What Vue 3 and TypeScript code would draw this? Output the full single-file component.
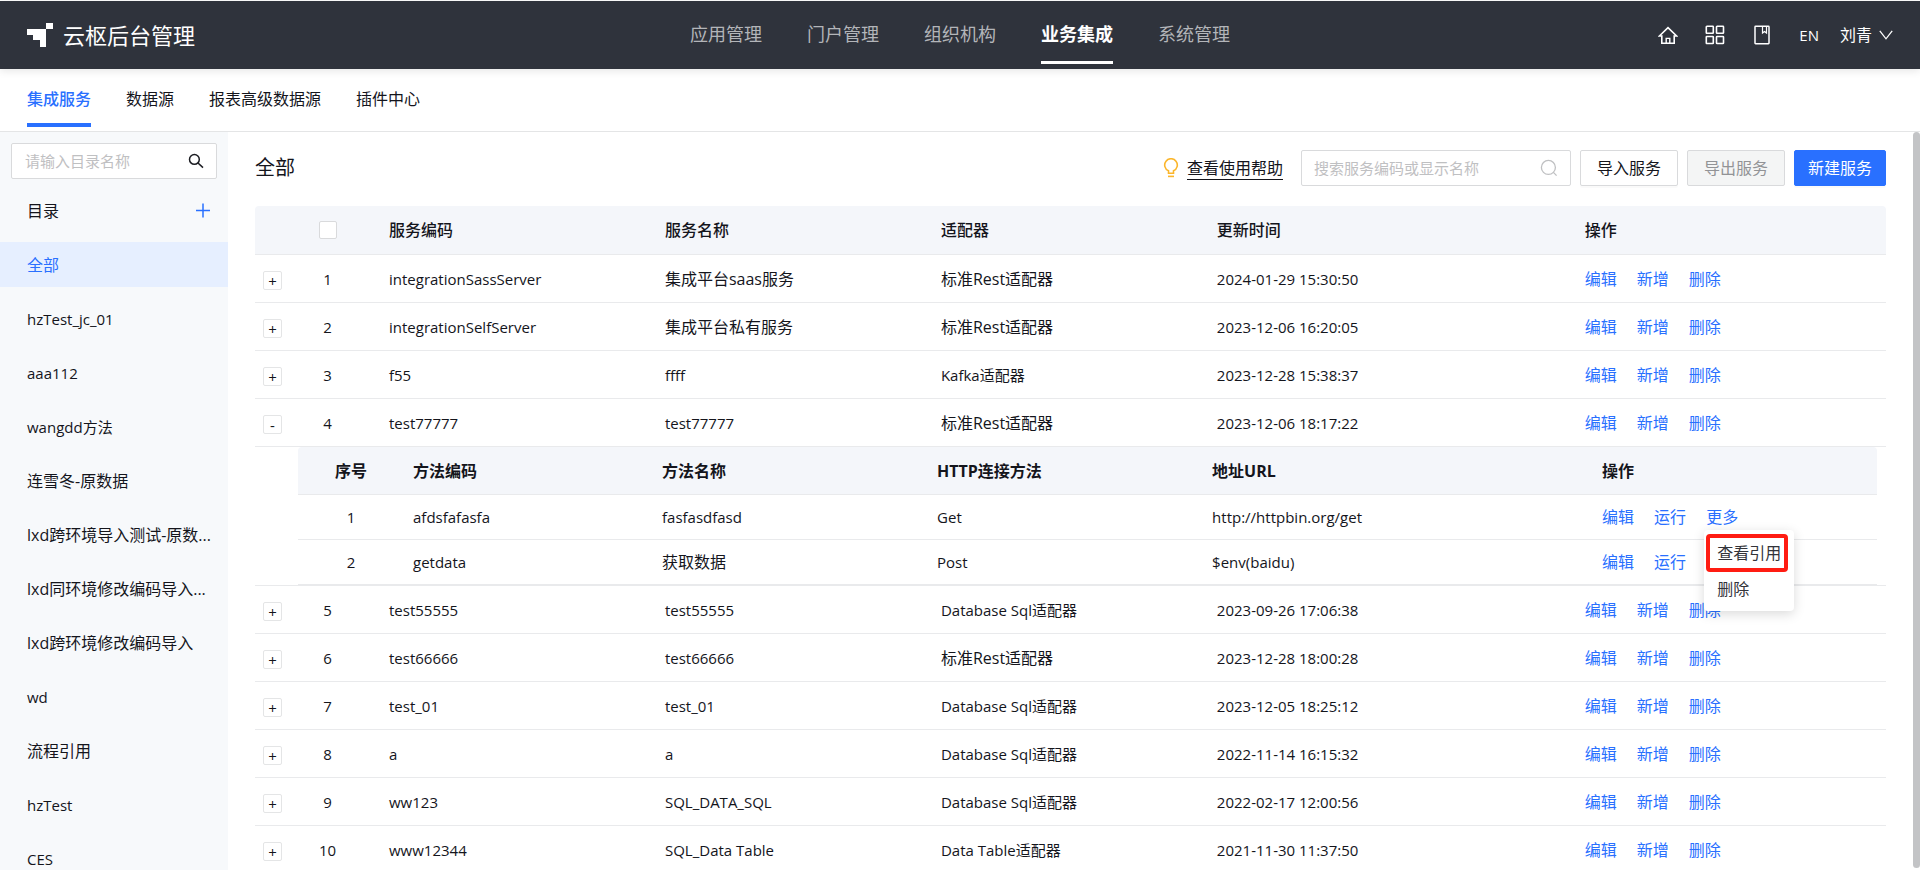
<script setup lang="ts">
import { ref } from 'vue'

interface Method {
  code: string
  name: string
  verb: string
  url: string
}

interface Service {
  code: string
  name: string
  adapter: string
  updated: string
  methods?: Method[]
}

const navItems = ['应用管理', '门户管理', '组织机构', '业务集成', '系统管理']
const activeNav = ref('业务集成')

const tabs = ['集成服务', '数据源', '报表高级数据源', '插件中心']
const activeTab = ref('集成服务')

const folders = [
  '全部',
  'hzTest_jc_01',
  'aaa112',
  'wangdd方法',
  '连雪冬-原数据',
  'lxd跨环境导入测试-原数...',
  'lxd同环境修改编码导入...',
  'lxd跨环境修改编码导入',
  'wd',
  '流程引用',
  'hzTest',
  'CES',
]
const activeFolder = ref('全部')

const services: Service[] = [
  { code: 'integrationSassServer', name: '集成平台saas服务', adapter: '标准Rest适配器', updated: '2024-01-29 15:30:50' },
  { code: 'integrationSelfServer', name: '集成平台私有服务', adapter: '标准Rest适配器', updated: '2023-12-06 16:20:05' },
  { code: 'f55', name: 'ffff', adapter: 'Kafka适配器', updated: '2023-12-28 15:38:37' },
  {
    code: 'test77777',
    name: 'test77777',
    adapter: '标准Rest适配器',
    updated: '2023-12-06 18:17:22',
    methods: [
      { code: 'afdsfafasfa', name: 'fasfasdfasd', verb: 'Get', url: 'http://httpbin.org/get' },
      { code: 'getdata', name: '获取数据', verb: 'Post', url: '$env(baidu)' },
    ],
  },
  { code: 'test55555', name: 'test55555', adapter: 'Database Sql适配器', updated: '2023-09-26 17:06:38' },
  { code: 'test66666', name: 'test66666', adapter: '标准Rest适配器', updated: '2023-12-28 18:00:28' },
  { code: 'test_01', name: 'test_01', adapter: 'Database Sql适配器', updated: '2023-12-05 18:25:12' },
  { code: 'a', name: 'a', adapter: 'Database Sql适配器', updated: '2022-11-14 16:15:32' },
  { code: 'ww123', name: 'SQL_DATA_SQL', adapter: 'Database Sql适配器', updated: '2022-02-17 12:00:56' },
  { code: 'www12344', name: 'SQL_Data Table', adapter: 'Data Table适配器', updated: '2021-11-30 11:37:50' },
]

const expanded = ref<string | null>('test77777')
const openMenu = ref<string | null>('afdsfafasfa')
const folderQuery = ref('')
const serviceQuery = ref('')

function toggleRow(code: string): void {
  expanded.value = expanded.value === code ? null : code
}

function toggleMenu(code: string): void {
  openMenu.value = openMenu.value === code ? null : code
}

// The open menu lies over the trigger of the row below it.
function isCovered(methods: Method[], index: number): boolean {
  return index > 0 && methods[index - 1].code === openMenu.value
}

// Mostly Latin strings are set one step smaller so they sit evenly beside Chinese text.
function isLatin(text: string): boolean {
  const latin = text.replace(/[^\x20-\x7e]/g, '').length
  return latin > text.length / 2
}
</script>

<template>
  <div class="shell">
    <header class="topbar">
      <a class="brand" href="#">
        <svg class="brand-mark" width="26" height="24" viewBox="0 0 26 24" aria-hidden="true">
          <path d="M0 6h19v18h-6v-7H6v-5H0z" fill="#fff" />
          <path d="M19 0h7v6h-7z" fill="#fff" />
        </svg>
        <span>云枢后台管理</span>
      </a>
      <nav class="nav">
        <a
          v-for="item in navItems"
          :key="item"
          href="#"
          class="nav-link"
          :class="{ active: item === activeNav }"
          @click.prevent="activeNav = item"
        >{{ item }}</a>
      </nav>
      <div class="tools">
        <button class="tool" type="button" aria-label="首页">
          <svg width="20" height="20" viewBox="0 0 20 20" fill="none" stroke="#fff" stroke-width="1.6">
            <path d="M1.400 11 10 2.600l8.600 8.400h-2.400v7.200H3.800V11z" />
            <path d="M8.200 18v-4.600h3.600V18" stroke-width="1.400" />
          </svg>
        </button>
        <button class="tool" type="button" aria-label="应用">
          <svg width="20" height="20" viewBox="0 0 20 20" fill="none" stroke="#fff" stroke-width="1.6">
            <rect x="1.3" y="1.3" width="7" height="7" rx="0.6" />
            <rect x="11.5" y="1.3" width="7" height="7" rx="0.6" />
            <rect x="1.3" y="11.5" width="7" height="7" rx="0.6" />
            <rect x="11.5" y="11.5" width="7" height="7" rx="0.6" />
          </svg>
        </button>
        <button class="tool" type="button" aria-label="文档">
          <svg width="20" height="20" viewBox="0 0 20 20" fill="none" stroke="#fff" stroke-width="1.5">
            <rect x="3" y="1.3" width="14" height="17.4" rx="0.6" />
            <path d="M10.5 1.5v6.6l2-1.5 2 1.5V1.5" stroke-width="1.2" />
          </svg>
        </button>
        <button class="tool lang" type="button">EN</button>
        <button class="tool user" type="button">
          <span>刘青</span>
          <svg width="14" height="10" viewBox="0 0 14 10" fill="none" stroke="#fff" stroke-width="1.3">
            <path d="m0.8 0.8 6.2 8 6.2-8" />
          </svg>
        </button>
      </div>
    </header>

    <nav class="tabs">
      <a
        v-for="tab in tabs"
        :key="tab"
        href="#"
        class="tab"
        :class="{ active: tab === activeTab }"
        @click.prevent="activeTab = tab"
      >{{ tab }}</a>
    </nav>

    <div class="body">
      <aside class="sidebar">
        <label class="field folder-search">
          <input v-model="folderQuery" type="text" placeholder="请输入目录名称" aria-label="请输入目录名称" />
          <svg width="16" height="16" viewBox="0 0 16 16" fill="none" stroke="#1b1c22" stroke-width="1.5">
            <circle cx="6.4" cy="6.4" r="4.9" />
            <path d="m10 10 5 4.6" />
          </svg>
        </label>
        <div class="folder-head">
          <span>目录</span>
          <button class="add" type="button" aria-label="新增目录">
            <svg width="16" height="16" viewBox="0 0 16 16" stroke="#2970ff" stroke-width="1.5">
              <path d="M8 0.500v14M1 7.500h14" />
            </svg>
          </button>
        </div>
        <ul class="folders">
          <li v-for="folder in folders" :key="folder">
            <a
              href="#"
              class="folder"
              :class="{ active: folder === activeFolder, latin: isLatin(folder) }"
              @click.prevent="activeFolder = folder"
            >{{ folder }}</a>
          </li>
        </ul>
      </aside>

      <main class="main">
        <div class="toolbar">
          <h1>{{ activeFolder }}</h1>
          <a class="help" href="#">
            <svg width="16" height="20" viewBox="0 0 16 20" fill="none" stroke="#fbb62c" stroke-width="1.6">
              <path d="M5.500 15.200v-2.400a6.300 6.300 0 1 1 5 0v2.400z" />
              <path d="M5 18.400h6" />
            </svg>
            <span>查看使用帮助</span>
          </a>
          <label class="field service-search">
            <input v-model="serviceQuery" type="text" placeholder="搜索服务编码或显示名称" aria-label="搜索服务编码或显示名称" />
            <svg width="18" height="18" viewBox="0 0 18 18" fill="none" stroke="#bfc0c2" stroke-width="1.3">
              <circle cx="8.4" cy="8.4" r="7" />
              <path d="m13.4 13.4 3.2 3.2" />
            </svg>
          </label>
          <div class="buttons">
            <button class="btn" type="button">导入服务</button>
            <button class="btn" type="button" disabled>导出服务</button>
            <button class="btn primary" type="button">新建服务</button>
          </div>
        </div>

        <table class="grid">
          <colgroup>
            <col class="c-expand" />
            <col class="c-check" />
            <col class="c-text" />
            <col class="c-text" />
            <col class="c-text" />
            <col class="c-time" />
            <col />
          </colgroup>
          <thead>
            <tr>
              <th></th>
              <th class="center"><input class="check" type="checkbox" aria-label="全选" /></th>
              <th>服务编码</th>
              <th>服务名称</th>
              <th>适配器</th>
              <th>更新时间</th>
              <th>操作</th>
            </tr>
          </thead>
          <tbody>
            <template v-for="(row, index) in services" :key="row.code">
              <tr>
                <td class="center">
                  <button class="expander" type="button" :aria-expanded="expanded === row.code" @click="toggleRow(row.code)">
                    {{ expanded === row.code ? '-' : '+' }}
                  </button>
                </td>
                <td class="center latin">{{ index + 1 }}</td>
                <td :class="{ latin: isLatin(row.code) }">{{ row.code }}</td>
                <td :class="{ latin: isLatin(row.name) }">{{ row.name }}</td>
                <td :class="{ latin: isLatin(row.adapter) }">{{ row.adapter }}</td>
                <td class="latin">{{ row.updated }}</td>
                <td>
                  <div class="actions">
                    <a href="#">编辑</a>
                    <a href="#">新增</a>
                    <a href="#">删除</a>
                  </div>
                </td>
              </tr>
              <tr v-if="expanded === row.code && row.methods">
                <td class="nested" colspan="7">
                  <table class="grid inner">
                    <colgroup>
                      <col class="n-index" />
                      <col class="n-code" />
                      <col class="n-text" />
                      <col class="n-text" />
                      <col class="n-url" />
                      <col />
                    </colgroup>
                    <thead>
                      <tr>
                        <th class="center">序号</th>
                        <th>方法编码</th>
                        <th>方法名称</th>
                        <th>HTTP连接方法</th>
                        <th>地址URL</th>
                        <th>操作</th>
                      </tr>
                    </thead>
                    <tbody>
                      <tr v-for="(method, n) in row.methods" :key="method.code">
                        <td class="center latin">{{ n + 1 }}</td>
                        <td :class="{ latin: isLatin(method.code) }">{{ method.code }}</td>
                        <td :class="{ latin: isLatin(method.name) }">{{ method.name }}</td>
                        <td class="latin">{{ method.verb }}</td>
                        <td class="latin">{{ method.url }}</td>
                        <td>
                          <div class="actions">
                            <a href="#">编辑</a>
                            <a href="#">运行</a>
                            <div v-if="!isCovered(row.methods, n)" class="more">
                              <a href="#" @click.prevent="toggleMenu(method.code)">更多</a>
                              <div v-if="openMenu === method.code" class="menu">
                                <button class="menu-item marked" type="button">查看引用</button>
                                <button class="menu-item" type="button">删除</button>
                              </div>
                            </div>
                          </div>
                        </td>
                      </tr>
                    </tbody>
                  </table>
                </td>
              </tr>
            </template>
          </tbody>
        </table>
      </main>

      <div class="rail" aria-hidden="true"><div class="thumb"></div></div>
    </div>
  </div>
</template>

<style>
body {
  margin: 0;
  background: #fff;
}
</style>

<style scoped>
.shell,
.shell * {
  box-sizing: border-box;
}

.shell {
  display: flex;
  flex-direction: column;
  height: 100vh;
  padding-top: 1px;
  overflow: hidden;
  background: #fff;
  color: #14151c;
  font-family: 'Open Sans', 'Noto Sans CJK SC', sans-serif;
  font-size: 16px;
  line-height: 24px;
}

a {
  color: inherit;
  text-decoration: none;
}

button {
  padding: 0;
  border: 0;
  background: none;
  color: inherit;
  font: inherit;
  cursor: pointer;
}

svg {
  display: block;
  flex: none;
}

.latin {
  font-size: 15px;
}

.topbar {
  position: relative;
  z-index: 2;
  display: grid;
  grid-template-columns: 1fr auto 1fr;
  flex: none;
  height: 68px;
  padding: 0 27px;
  background: #2f333c;
  box-shadow: 0 2px 8px rgba(0, 0, 0, 0.1);
  color: #fff;
}

.brand {
  display: flex;
  align-items: center;
  gap: 10px;
  font-size: 22px;
  white-space: nowrap;
}

.nav {
  display: flex;
  gap: 45px;
  font-size: 18px;
}

.nav-link {
  height: 63px;
  border-bottom: 3px solid transparent;
  color: #b3b5b9;
  line-height: 66px;
  white-space: nowrap;
}

.nav-link.active {
  border-color: #fff;
  color: #fff;
  font-weight: 700;
}

.tools {
  display: flex;
  justify-content: flex-end;
  align-items: center;
  gap: 27px;
}

.tool {
  flex: none;
}

.lang {
  font-size: 15px;
}

.user {
  display: flex;
  align-items: center;
  gap: 7px;
  margin-left: -6px;
}

.tabs {
  display: flex;
  flex: none;
  gap: 35px;
  height: 63px;
  padding: 0 27px;
  border-bottom: 1px solid #e4e5e6;
}

.tab {
  height: 58px;
  border-bottom: 4px solid transparent;
  line-height: 60px;
}

.tab.active {
  border-color: #2970ff;
  color: #2970ff;
  font-weight: 500;
}

.body {
  display: flex;
  flex: 1;
  min-height: 0;
}

.sidebar {
  flex: none;
  width: 228px;
  padding-top: 11px;
  overflow-y: auto;
  background: #f7f9fb;
  scrollbar-width: none;
}

.field {
  display: flex;
  align-items: center;
  height: 36px;
  border: 1px solid #d9dadc;
  border-radius: 2px;
  background: #fff;
}

.field input {
  flex: 1;
  min-width: 0;
  padding: 0;
  border: 0;
  outline: 0;
  background: none;
  color: inherit;
  font-family: inherit;
  font-size: 15px;
}

.field input::placeholder {
  color: #bfc0c2;
}

.folder-search {
  margin: 0 11px;
  padding: 0 12px 0 13px;
}

.folder-head {
  display: flex;
  align-items: center;
  justify-content: space-between;
  height: 63px;
  padding: 0 17px 0 27px;
}

.folders {
  margin: 0;
  padding: 0;
  list-style: none;
}

.folder {
  display: block;
  height: 45px;
  margin-bottom: 9px;
  padding: 0 18px 0 27px;
  overflow: hidden;
  line-height: 46px;
  white-space: nowrap;
}

.folder.active {
  background: #e6efff;
  color: #2970ff;
}

.main {
  flex: 1;
  min-width: 0;
  padding: 18px 27px 0;
  overflow-y: auto;
  scrollbar-width: none;
}

.toolbar {
  display: flex;
  align-items: center;
  height: 36px;
  margin-bottom: 20px;
}

h1 {
  flex: 1;
  margin: 0;
  font-size: 20px;
  font-weight: 400;
}

.help {
  display: flex;
  align-items: center;
  gap: 8px;
  margin-right: 18px;
}

.help span {
  border-bottom: 1px solid #14151c;
  line-height: 22px;
}

.service-search {
  width: 270px;
  margin-right: 9px;
  padding: 0 12px;
}

.buttons {
  display: flex;
  gap: 9px;
}

.btn {
  height: 36px;
  padding: 0 16px;
  border: 1px solid #d9dadc;
  border-radius: 2px;
  background: #fff;
  box-shadow: 0 2px 0 rgba(0, 0, 0, 0.02);
}

.btn:disabled {
  background: #f4f5f5;
  box-shadow: none;
  color: #929396;
}

.btn.primary {
  padding: 0 13px;
  border-color: #2970ff;
  background: #2970ff;
  color: #fff;
}

.grid {
  width: 100%;
  border-spacing: 0;
  table-layout: fixed;
}

.c-expand {
  width: 36px;
}

.c-check {
  width: 73px;
}

.c-text {
  width: 16.92%;
}

.c-time {
  width: 22.56%;
}

th,
td {
  height: 48px;
  padding: 0 0 0 25px;
  border-bottom: 1px solid #e9eaec;
  text-align: left;
  white-space: nowrap;
}

th {
  height: 49px;
  background: #f4f6fa;
  font-weight: 500;
}

th:first-child {
  border-top-left-radius: 4px;
}

th:last-child {
  border-top-right-radius: 4px;
}

.center {
  padding: 0;
  text-align: center;
}

.check {
  display: block;
  width: 18px;
  height: 18px;
  margin: 0 auto;
  border: 1px solid #d9dadc;
  border-radius: 2px;
  appearance: none;
  background: #fff;
}

.check:checked {
  background: #2970ff;
}

.expander {
  display: block;
  width: 19px;
  height: 19px;
  margin: 4px auto 0 8px;
  border: 1px solid #e4e5e6;
  border-radius: 2px;
  background: #fff;
  font-size: 15px;
  line-height: 16px;
}

.actions {
  display: flex;
  gap: 20px;
  color: #2970ff;
}

.nested {
  padding: 0 9px 0 43px;
}

.inner th,
.inner td {
  height: 45px;
  padding-left: 9px;
}

.inner th {
  height: 48px;
  font-weight: 700;
}

.inner .center {
  padding-left: 0;
}

.n-index {
  width: 106px;
}

.n-code {
  width: 15.77%;
}

.n-text {
  width: 17.42%;
}

.n-url {
  width: 24.7%;
}

.more {
  position: relative;
}

.menu {
  position: absolute;
  z-index: 3;
  top: 25px;
  left: -2px;
  width: 90px;
  height: 81px;
  padding: 4px 2px;
  border-radius: 4px;
  background: #fff;
  box-shadow: 0 3px 12px rgba(0, 0, 0, 0.15);
  color: #33343a;
}

.menu-item {
  display: block;
  height: 34px;
  padding: 0 11px;
}

.menu-item.marked {
  height: 38px;
  padding: 0 3px 0 7px;
  border: 4px solid #ff1c12;
  border-radius: 4px;
}

.rail {
  flex: none;
  width: 7px;
  padding-bottom: 2px;
}

.thumb {
  height: 100%;
  border-radius: 4px;
  background: #c3c4c6;
}
</style>
